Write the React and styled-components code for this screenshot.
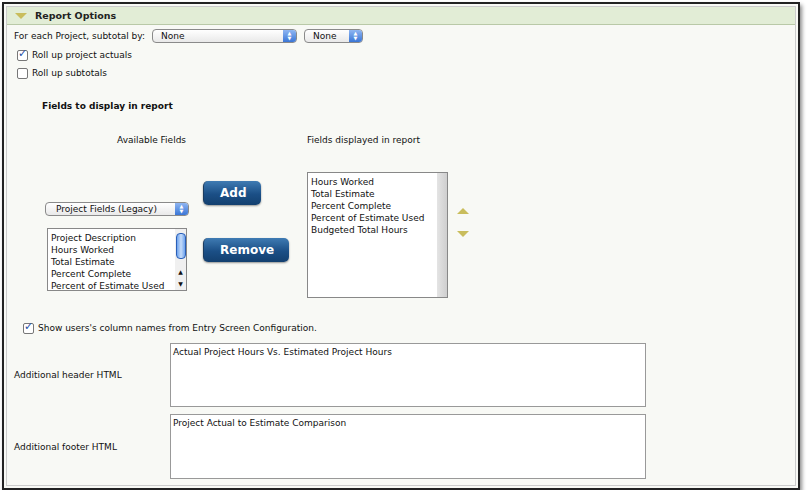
import React from "react";
import styled, { createGlobalStyle } from "styled-components";

const Global = createGlobalStyle`
  body { margin: 0; background: #fff; font-family: "DejaVu Sans", Verdana, sans-serif; font-size: 9px; color: #111; }
`;
const Frame = styled.div`
  margin: 2px 0 0 2px; width: 798px; height: 488px; box-sizing: border-box;
  border: 2px solid #222; box-shadow: 2px 3px 4px rgba(0,0,0,0.45); background: #f8f9f5;
  padding: 2px; display: flex;
`;
const Panel = styled.div`
  flex: 1; border: 1px solid #ccc; display: flex; flex-direction: column;
`;
const Header = styled.div`
  height: 17px; background: #e2edd6; border-bottom: 1px solid #b9c9a7;
  display: flex; align-items: center; padding-left: 8px; gap: 8px; font-weight: bold; font-size: 9.5px; color: #222;
`;
const Body = styled.div` display: flex; flex-direction: column; padding: 1px 0 0 5px; `;
const Row = styled.div` display: flex; align-items: center; gap: ${p => p.gap || 4}px; height: ${p => p.h || 18}px; padding-left: ${p => p.pl || 0}px; `;
const Select = styled.div`
  width: ${p => p.w}px; height: 14px; box-sizing: border-box; border: 1px solid #8a8a8a; border-radius: 4px;
  background: linear-gradient(#fff, #e9e9e9); display: flex; align-items: center; padding-left: ${p => p.pl || 8}px;
  position: relative; font-size: 9px;
`;
const Stepper = styled.span`
  position: absolute; right: 0; top: 0; bottom: 0; width: 13px; border-radius: 0 3px 3px 0;
  background: linear-gradient(#8fb6f2, #3a76d6); color: #fff; font-size: 5px; line-height: 5px;
  display: flex; flex-direction: column; align-items: center; justify-content: center;
`;
const Box = styled.span`
  width: 9px; height: 9px; border: 1px solid #777; border-radius: 2px; background: #fff; position: relative; display: inline-block;
`;
const Check = styled.span` position: absolute; left: 0px; top: -4px; color: #1f4fa7; font-size: 11px; font-weight: bold; `;
const Bold = styled.div` font-weight: bold; margin: ${p => p.m}; `;
const Columns = styled.div` display: flex; margin-top: 24px; margin-left: 33px; `;
const Col = styled.div` display: flex; flex-direction: column; width: ${p => p.w}px; align-items: flex-start; `;
const ListBox = styled.div`
  width: ${p => p.w}px; height: ${p => p.h}px; box-sizing: border-box; border: 1px solid #888; background: #fff;
  display: flex; line-height: 12px;
`;
const Items = styled.div` flex: 1; padding: 3px 0 0 3px; white-space: nowrap; overflow: hidden; `;
const Track = styled.div` width: ${p => p.w}px; background: ${p => p.bg}; display: flex; flex-direction: column; align-items: center; justify-content: space-between; `;
const Thumb = styled.div` margin-top: 4px; width: 8px; height: 24px; border-radius: 4px; border: 1px solid #2a5fb8; background: linear-gradient(90deg,#6ea3ee,#c6dcf9,#6ea3ee); `;
const Btn = styled.div`
  width: ${p => p.w}px; height: 24px; border-radius: 5px; color: #fff; font-weight: bold; font-size: 12px;
  font-family: "DejaVu Sans", sans-serif; background: linear-gradient(#3f7bb3, #1b4f86 55%, #13406f);
  box-shadow: 0 1px 2px rgba(0,0,0,0.4); display: flex; align-items: center; padding-left: 16px; box-sizing: border-box;
  border-left: 1px solid #1b3c60;
`;
const Tri = styled.div`
  width: 0; height: 0; border-left: 6px solid transparent; border-right: 6px solid transparent;
  ${p => p.up ? "border-bottom: 6px solid #c9bd5c;" : "border-top: 6px solid #c9bd5c;"}
`;
const FieldRow = styled.div` display: flex; align-items: center; margin-top: ${p => p.mt}px; padding-left: 2px; `;
const Label = styled.div` width: 156px; `;
const Area = styled.div`
  width: 476px; height: 64px; box-sizing: border-box; border: 1px solid #999; background: #fff; padding: 3px 2px;
`;

export default function App() {
  return (
    <>
      <Global />
      <Frame><Panel>
        <Header><Tri /><span>Report Options</span></Header>
        <Body>
          <Row h={20} pl={2}>
            <span>For each Project, subtotal by:</span>
            <Select w={145} style={{marginLeft:3}}>None<Stepper>▲<br/>▼</Stepper></Select>
            <Select w={59} style={{marginLeft:3}}>None<Stepper>▲<br/>▼</Stepper></Select>
          </Row>
          <Row pl={5}><Box><Check>✓</Check></Box><span>Roll up project actuals</span></Row>
          <Row pl={5}><Box /><span>Roll up subtotals</span></Row>
          <Bold m="19px 0 0 30px">Fields to display in report</Bold>
          <Columns>
            <Col w={158}>
              <div style={{marginLeft:72}}>Available Fields</div>
              <Select w={144} pl={10} style={{marginTop:57}}>Project Fields (Legacy)<Stepper>▲<br/>▼</Stepper></Select>
              <ListBox w={140} h={63} style={{marginTop:12, marginLeft:2}}>
                <Items>Project Description<br/>Hours Worked<br/>Total Estimate<br/>Percent Complete<br/>Percent of Estimate Used</Items>
                <Track w={11} bg="#f0f0f0"><Thumb /><span style={{fontSize:6}}>▲<br/>▼</span></Track>
              </ListBox>
            </Col>
            <Col w={104} style={{paddingTop:46}}>
              <Btn w={58}>Add</Btn>
              <Btn w={86} style={{marginTop:33}}>Remove</Btn>
            </Col>
            <Col w={150}>
              <div>Fields displayed in report</div>
              <ListBox w={141} h={126} style={{marginTop:27}}>
                <Items>Hours Worked<br/>Total Estimate<br/>Percent Complete<br/>Percent of Estimate Used<br/>Budgeted Total Hours</Items>
                <Track w={10} bg="linear-gradient(90deg,#e4e4e4,#cfcfcf)" />
              </ListBox>
            </Col>
            <Col w={20} style={{paddingTop:73, gap:17}}><Tri up /><Tri /></Col>
          </Columns>
          <Row pl={11} style={{marginTop:21}}><Box><Check>✓</Check></Box><span>Show users's column names from Entry Screen Configuration.</span></Row>
          <FieldRow mt={6}><Label>Additional header HTML</Label><Area>Actual Project Hours Vs. Estimated Project Hours</Area></FieldRow>
          <FieldRow mt={7}><Label>Additional footer HTML</Label><Area style={{height:65}}>Project Actual to Estimate Comparison</Area></FieldRow>
        </Body>
      </Panel></Frame>
    </>
  );
}
